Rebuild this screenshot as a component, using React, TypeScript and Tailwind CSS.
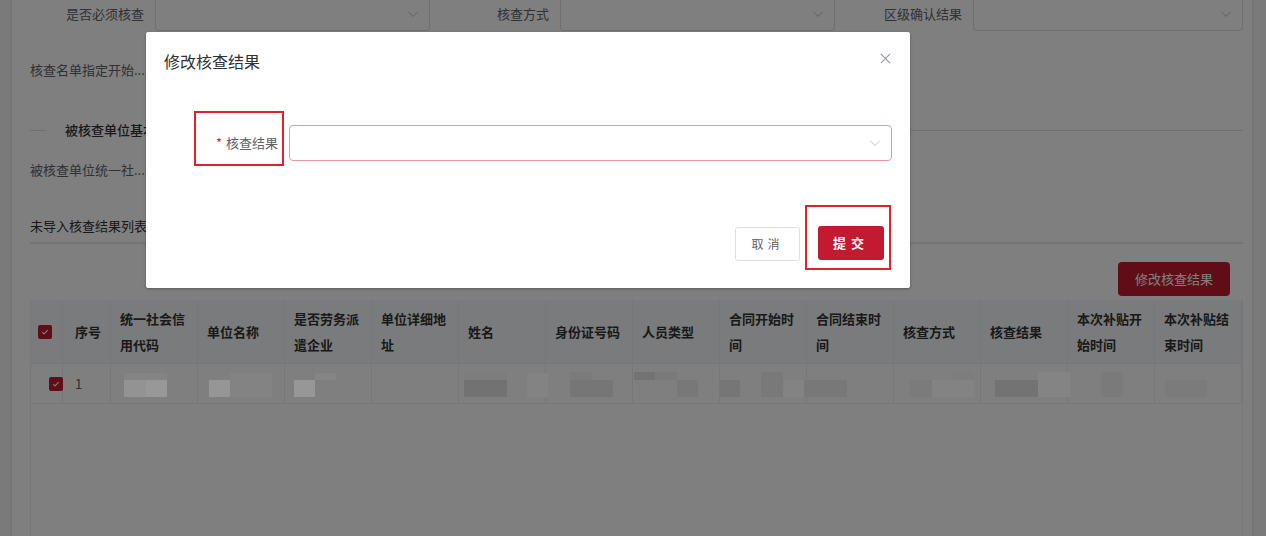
import React from 'react'

const RED = '#c21a30'

const headers = [
  '序号',
  '统一社会信用代码',
  '单位名称',
  '是否劳务派遣企业',
  '单位详细地址',
  '姓名',
  '身份证号码',
  '人员类型',
  '合同开始时间',
  '合同结束时间',
  '核查方式',
  '核查结果',
  '本次补贴开始时间',
  '本次补贴结束时间',
]

// redacted cell contents, [left, top, width, height, colour] in page px
const mosaic: [number, number, number, number, string][] = [
  [124, 373, 43, 7, '#848484'],
  [124, 380, 22, 17, '#939393'],
  [146, 380, 21, 17, '#989898'],
  [230, 373, 42, 24, '#838383'],
  [209, 380, 21, 17, '#969696'],
  [315, 373, 21, 7, '#858585'],
  [294, 380, 21, 17, '#979797'],
  [464, 372, 43, 8, '#7d7d7d'],
  [464, 380, 43, 17, '#727272'],
  [527, 373, 21, 24, '#838383'],
  [549, 380, 21, 17, '#7f7f7f'],
  [570, 372, 22, 8, '#7b7b7b'],
  [570, 380, 43, 17, '#767676'],
  [634, 372, 21, 8, '#737373'],
  [655, 372, 22, 8, '#7a7a7a'],
  [677, 380, 21, 17, '#787878'],
  [719, 380, 21, 17, '#767676'],
  [761, 372, 22, 25, '#797979'],
  [783, 380, 21, 17, '#838383'],
  [804, 380, 43, 17, '#787878'],
  [932, 380, 42, 17, '#838383'],
  [910, 380, 22, 17, '#7b7b7b'],
  [953, 372, 21, 8, '#7d7d7d'],
  [1038, 372, 32, 25, '#848484'],
  [995, 380, 43, 17, '#737373'],
  [1101, 372, 22, 25, '#7a7a7a'],
  [1165, 380, 42, 17, '#7b7b7b'],
  [1187, 372, 20, 8, '#7f7f7f'],
]

function Chevron({ className }: { className?: string }) {
  return (
    <svg viewBox="0 0 12 12" className={className} fill="none" stroke="currentColor" strokeWidth="1">
      <path d="M1.5 4l4.5 4.5L10.5 4" />
    </svg>
  )
}

function Check({ className }: { className?: string }) {
  return (
    <span className={`flex h-[14px] w-[14px] items-center justify-center rounded-[2px] ${className ?? ''}`} style={{ background: RED }}>
      <svg viewBox="0 0 10 10" className="h-[8px] w-[8px]" fill="none" stroke="white" strokeWidth="1.3">
        <path d="M1.5 5.2l2.3 2.2 4.6-4.8" />
      </svg>
    </span>
  )
}

function FilterItem({ label }: { label: string }) {
  return (
    <div className="flex h-[34px] items-center">
      <span className="w-[125px] shrink-0 pr-[11px] text-right text-[13px] text-[#606266]">{label}</span>
      <div className="flex h-full flex-1 items-center justify-end rounded-b-[4px] border border-t-0 border-[#dcdfe6] bg-white pr-[10px]">
        <Chevron className="h-[12px] w-[12px] text-[#c0c4cc]" />
      </div>
    </div>
  )
}

export default function App() {
  return (
    <div className="relative flex h-[536px] w-[1266px] overflow-hidden bg-[#f4f4f4] font-['Noto_Sans_CJK_SC','Noto_Sans',sans-serif]">
      {/* page */}
      <div className="ml-[10px] mr-[12px] flex flex-1 flex-col border-x-2 border-[#ececec] bg-white pl-[18px] pr-[9px]">
        <div className="-mt-[3px] grid grid-cols-[400px_400px_1fr] gap-x-[5px]">
          <FilterItem label="是否必须核查" />
          <FilterItem label="核查方式" />
          <div className="pl-[8px]">
            <FilterItem label="区级确认结果" />
          </div>
        </div>

        <div className="mt-[29px] text-[13px] leading-[20px] text-[#606266]">核查名单指定开始...</div>

        <div className="mt-[40px] flex items-center">
          <div className="h-px w-[16px] bg-[#dcdfe6]" />
          <span className="px-[19px] text-[13px] font-medium leading-[20px] text-[#303133]">被核查单位基本信息</span>
          <div className="h-px flex-1 bg-[#dcdfe6]" />
        </div>

        <div className="mt-[20px] text-[13px] leading-[20px] text-[#606266]">被核查单位统一社...</div>

        <div className="mt-[36px] border-b-2 border-[#e9e9eb] pb-[6px] text-[13px] leading-[20px] text-[#303133]">未导入核查结果列表</div>

        <div className="mt-[18px] flex justify-end pr-[13px]">
          <button className="h-[34px] w-[112px] rounded-[4px] text-[13px] text-white" style={{ background: RED }}>
            修改核查结果
          </button>
        </div>

        {/* table */}
        <div className="mt-[4px] flex flex-1 flex-col border-x border-[#ebeef5]">
          <div className="grid grid-cols-[32px_48px_repeat(13,1fr)] bg-[#f5f7fa]">
            <div className="flex h-[64px] items-center justify-center border-b border-r border-[#ebeef5] pr-[4px]">
              <Check />
            </div>
            {headers.map((h, i) => (
              <div
                key={h}
                className={`flex h-[64px] items-center border-b border-r border-[#ebeef5] pr-[8px] text-[13px] font-bold leading-[26px] text-[#333] ${i === 0 ? 'pl-[12px]' : 'pl-[9px]'}`}
              >
                {h}
              </div>
            ))}
          </div>
          <div className="grid grid-cols-[32px_48px_repeat(13,1fr)] bg-white">
            <div className="flex h-[40px] items-center justify-end border-b border-r border-[#ebeef5]">
              <Check className="-mr-[1px]" />
            </div>
            <div className="flex h-[40px] items-center border-b border-r border-[#ebeef5] pl-[12px] text-[13px] text-[#606266]">1</div>
            {headers.slice(1).map((h) => (
              <div key={h} className="h-[40px] border-b border-r border-[#ebeef5]" />
            ))}
          </div>
          <div className="flex-1" />
        </div>
      </div>

      {/* backdrop */}
      <div className="absolute inset-0 bg-black/50" />

      {/* redacted values drawn over the row */}
      {mosaic.map(([x, y, w, h, c], i) => (
        <div key={i} className="absolute" style={{ left: x, top: y, width: w, height: h, background: c }} />
      ))}

      {/* dialog */}
      <div className="absolute left-[146px] top-[32px] flex w-[764px] flex-col rounded-[2px] bg-white shadow-[0_1px_3px_rgba(0,0,0,0.3)]">
        <div className="flex items-center justify-between pl-[18px] pr-[19px] pt-[19px]">
          <span className="text-[16px] leading-[20px] text-[#303133]">修改核查结果</span>
          <svg viewBox="0 0 12 12" className="-mt-[6px] h-[11px] w-[11px] text-[#909399]" fill="none" stroke="currentColor" strokeWidth="1.1">
            <path d="M1 1l10 10M11 1L1 11" />
          </svg>
        </div>

        <div className="mt-[40px] flex items-start pl-[48px] pr-[18px]">
          <div className="h-[55px] w-[90px] border-2 border-[#e3212b] pt-[20px] pr-[4px] text-right text-[13px] leading-[20px] text-[#606266]">
            <span className="mr-[4px] text-[#e3212b]">*</span>核查结果
          </div>
          <div className="ml-[5px] mt-[14px] flex h-[36px] flex-1 items-center justify-end rounded-[4px] border border-[#eb98a2] pr-[10px]">
            <Chevron className="h-[12px] w-[12px] text-[#c0c4cc]" />
          </div>
        </div>

        <div className="mt-[39px] flex items-start justify-end pb-[18px] pr-[19px]">
          <button className="mt-[22px] h-[34px] w-[65px] rounded-[3px] border border-[#dcdfe6] text-[12px] tracking-[4px] text-[#606266]">
            取消
          </button>
          <div className="ml-[5px] border-2 border-[#e3212b] pb-[8px] pl-[11px] pr-[5px] pt-[19px]">
            <button className="h-[34px] w-[66px] rounded-[3px] text-[13px] font-bold tracking-[5px] text-white" style={{ background: RED }}>
              提交
            </button>
          </div>
        </div>
      </div>
    </div>
  )
}
